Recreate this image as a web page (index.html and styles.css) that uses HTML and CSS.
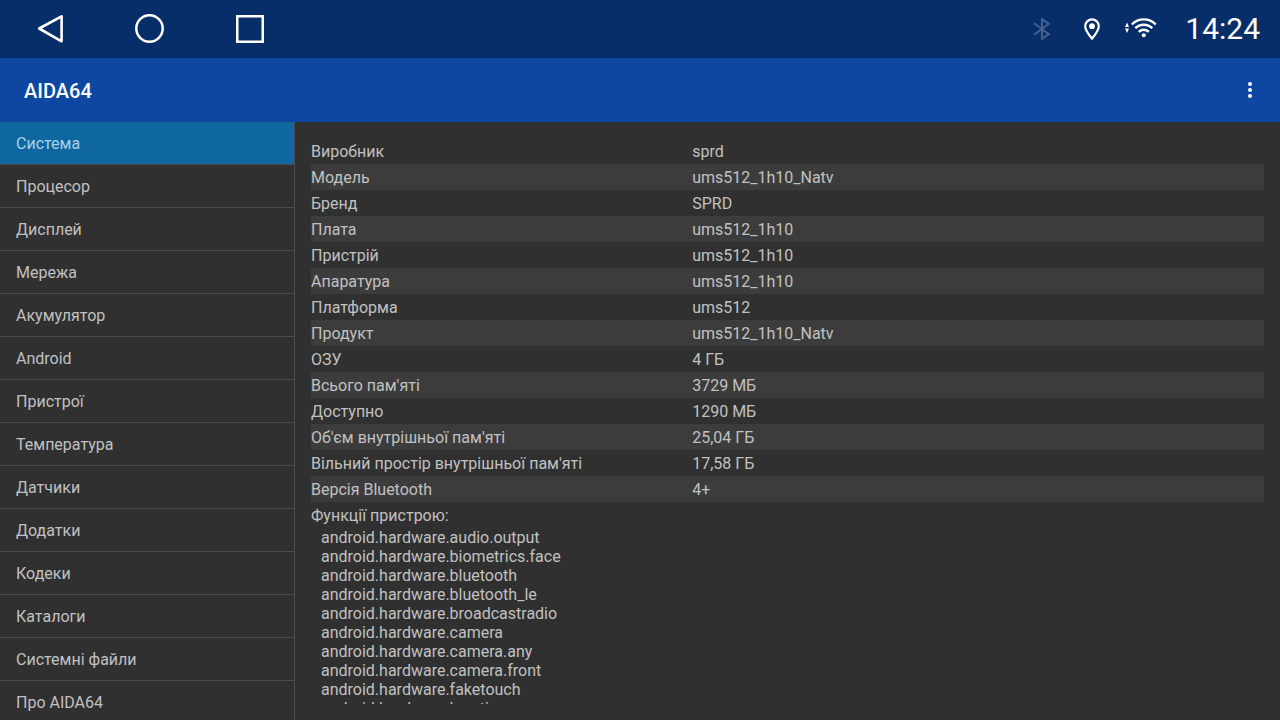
FILE: index.html
```html
<!DOCTYPE html>
<html lang="uk">
<head>
<meta charset="utf-8">
<meta name="viewport" content="width=device-width, initial-scale=1">
<title>AIDA64</title>
<link rel="stylesheet" href="styles.css">
</head>
<body class="screen">
<header class="status-bar">
  <div class="nav-keys">
    <button class="nav-key" type="button" aria-label="Назад">
      <svg width="28" height="28" viewBox="0 0 28 28"><path d="M3.2 13.5 25.6 1.3V26.3Z" fill="none" stroke="#fff" stroke-width="2.6" stroke-linejoin="round"/></svg>
    </button>
    <button class="nav-key" type="button" aria-label="Головна">
      <svg width="30" height="30" viewBox="0 0 30 30"><circle cx="14.5" cy="14.5" r="13.2" fill="none" stroke="#fff" stroke-width="2.5"/></svg>
    </button>
    <button class="nav-key" type="button" aria-label="Огляд">
      <svg width="28" height="28" viewBox="0 0 28 28"><rect x="1.25" y="1.25" width="25.5" height="25.5" fill="none" stroke="#fff" stroke-width="2.5"/></svg>
    </button>
  </div>
  <div class="indicators">
    <svg class="bluetooth" width="18" height="24" viewBox="0 0 18 24"><path d="M1.2 6.2 15.8 17.2 9 21.8V2.2L15.8 6.8 1.2 17.8" fill="none" stroke="currentColor" stroke-width="2"/></svg>
    <svg width="18" height="24" viewBox="0 0 18 24"><path d="M9 21.6C6 18 2.2 13.5 2.2 9.2A6.8 6.8 0 0 1 15.8 9.2C15.8 13.5 12 18 9 21.6Z" fill="none" stroke="#fff" stroke-width="2.2"/><circle cx="9" cy="9.2" r="2.9" fill="#fff"/></svg>
    <svg width="32" height="24" viewBox="0 0 32 24"><g fill="#fff"><path d="M0 10 2 5.5 4 10ZM0 11.5H4L2 16Z"/><circle cx="18.8" cy="18.2" r="2"/></g><g fill="none" stroke="#fff" stroke-width="2.4"><path d="M6.8 7.5C13.5.7 24.1.7 30.8 7.5M10.3 11.2C15 6.5 22.6 6.5 27.3 11.2M13.8 14.8C16.6 12 21 12 23.8 14.8"/></g></svg>
    <time class="clock">14:24</time>
  </div>
</header>
<div class="app-bar">
  <h1 class="app-title">AIDA64</h1>
  <button class="menu-button" type="button" aria-label="Інші опції">
    <svg width="4" height="16" viewBox="0 0 4 16" fill="#fff"><circle cx="2" cy="2" r="2"/><circle cx="2" cy="8" r="2"/><circle cx="2" cy="14" r="2"/></svg>
  </button>
</div>
<div class="content">
  <nav class="sidebar">
    <a class="sidebar-item is-active" href="#" aria-current="page">Система</a>
    <a class="sidebar-item" href="#">Процесор</a>
    <a class="sidebar-item" href="#">Дисплей</a>
    <a class="sidebar-item" href="#">Мережа</a>
    <a class="sidebar-item" href="#">Акумулятор</a>
    <a class="sidebar-item" href="#">Android</a>
    <a class="sidebar-item" href="#">Пристрої</a>
    <a class="sidebar-item" href="#">Температура</a>
    <a class="sidebar-item" href="#">Датчики</a>
    <a class="sidebar-item" href="#">Додатки</a>
    <a class="sidebar-item" href="#">Кодеки</a>
    <a class="sidebar-item" href="#">Каталоги</a>
    <a class="sidebar-item" href="#">Системні файли</a>
    <a class="sidebar-item" href="#">Про AIDA64</a>
  </nav>
  <main class="details">
    <div class="scroll-area">
      <table class="info">
        <tbody>
          <tr><th scope="row">Виробник</th><td>sprd</td></tr>
          <tr><th scope="row">Модель</th><td>ums512_1h10_Natv</td></tr>
          <tr><th scope="row">Бренд</th><td>SPRD</td></tr>
          <tr><th scope="row">Плата</th><td>ums512_1h10</td></tr>
          <tr><th scope="row">Пристрій</th><td>ums512_1h10</td></tr>
          <tr><th scope="row">Апаратура</th><td>ums512_1h10</td></tr>
          <tr><th scope="row">Платформа</th><td>ums512</td></tr>
          <tr><th scope="row">Продукт</th><td>ums512_1h10_Natv</td></tr>
          <tr><th scope="row">ОЗУ</th><td>4 ГБ</td></tr>
          <tr><th scope="row">Всього пам'яті</th><td>3729 МБ</td></tr>
          <tr><th scope="row">Доступно</th><td>1290 МБ</td></tr>
          <tr><th scope="row">Об'єм внутрішньої пам'яті</th><td>25,04 ГБ</td></tr>
          <tr><th scope="row">Вільний простір внутрішньої пам'яті</th><td>17,58 ГБ</td></tr>
          <tr><th scope="row">Версія Bluetooth</th><td>4+</td></tr>
        </tbody>
      </table>
      <h2 class="features-title">Функції пристрою:</h2>
      <ul class="features">
        <li>android.hardware.audio.output</li>
        <li>android.hardware.biometrics.face</li>
        <li>android.hardware.bluetooth</li>
        <li>android.hardware.bluetooth_le</li>
        <li>android.hardware.broadcastradio</li>
        <li>android.hardware.camera</li>
        <li>android.hardware.camera.any</li>
        <li>android.hardware.camera.front</li>
        <li>android.hardware.faketouch</li>
        <li>android.hardware.location</li>
      </ul>
    </div>
  </main>
</div>
</body>
</html>
```
FILE: styles.css
```css
* {
  box-sizing: border-box;
}

.screen {
  display: flex;
  flex-direction: column;
  height: 100vh;
  margin: 0;
  overflow: hidden;
  background: #303030;
  color: #c1c1c1;
  font: 16px/24px Roboto, "Noto Sans", sans-serif;
}

button {
  display: flex;
  align-items: center;
  justify-content: center;
  padding: 0;
  border: 0;
  background: none;
}

.status-bar {
  display: flex;
  flex: none;
  align-items: center;
  justify-content: space-between;
  height: 58px;
  padding-right: 20px;
  background: #082e6a;
}

.nav-keys {
  display: flex;
}

.nav-key {
  width: 100px;
  height: 58px;
}

.indicators {
  display: flex;
  align-items: center;
  gap: 24px;
}

.bluetooth {
  margin-right: 8px;
  color: #45608f;
}

.clock {
  margin-left: 4px;
  color: #fff;
  font-size: 30px;
  line-height: 36px;
}

.app-bar {
  display: flex;
  flex: none;
  align-items: center;
  justify-content: space-between;
  height: 64px;
  padding: 0 10px 0 24px;
  background: #0e47a1;
}

.app-title {
  margin: 0;
  padding-top: 2px;
  color: #fff;
  font-size: 20px;
  font-weight: 500;
}

.menu-button {
  width: 40px;
  height: 48px;
}

.content {
  display: flex;
  flex: 1;
  min-height: 0;
}

.sidebar {
  flex: none;
  width: 295px;
  overflow: hidden;
  border-right: 1px solid #4a4a4a;
}

.sidebar-item {
  display: block;
  padding: 10px 16px 8px;
  border-bottom: 1px solid #4a4a4a;
  color: inherit;
  text-decoration: none;
}

.is-active {
  background: #0e679f;
  color: #a9d2ea;
}

.details {
  display: flex;
  flex: 1;
  min-width: 0;
  padding: 16px;
}

.scroll-area {
  flex: 1;
  overflow: hidden;
}

.info {
  width: 100%;
  table-layout: fixed;
  border-collapse: collapse;
}

.info th,
.info td {
  padding: 2px 0 0;
  font-weight: 400;
  text-align: left;
}

.info th {
  width: 40%;
}

.info tr:nth-child(even) {
  background: #3c3c3c;
}

.features-title {
  margin: 0;
  padding-top: 2px;
  font-size: 16px;
  font-weight: 400;
}

.features {
  margin: 0;
  padding: 0 0 0 10px;
  line-height: 19px;
  list-style: none;
}
```
